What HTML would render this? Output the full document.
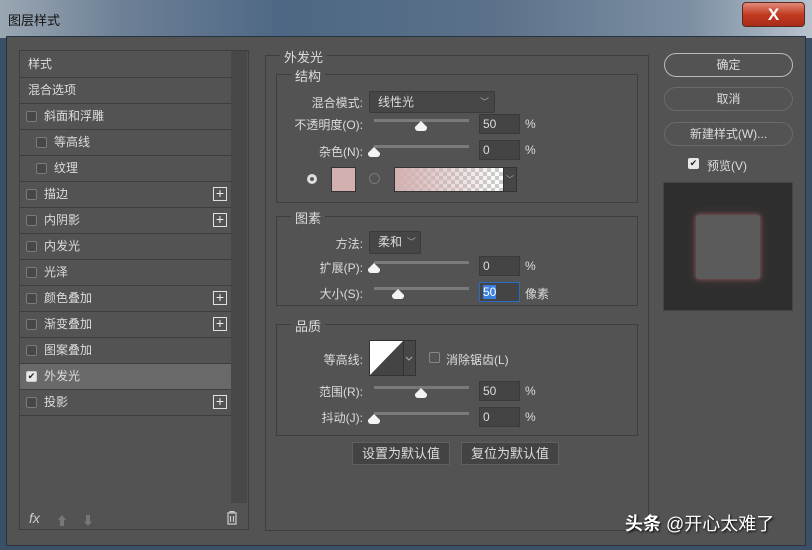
<!DOCTYPE html>
<html><head><meta charset="utf-8"><style>
*{box-sizing:border-box;margin:0;padding:0}
body{width:812px;height:550px;overflow:hidden;background:#3b5066;font-family:"Liberation Sans","Noto Sans CJK SC",sans-serif;font-size:12px;color:#dcdcdc;position:relative}
.a{position:absolute}
.title{left:0;top:0;width:812px;height:38px;background:linear-gradient(90deg,#9aa7b3 0%,#6d8096 15%,#4d6784 35%,#5a7189 60%,#7d8fa3 85%,#b8c3cd 100%)}
.frame{left:6px;top:36px;width:800px;height:510px;background:#535353;border:1px solid #2a3440}
.list{left:19px;top:50px;width:230px;height:480px;border:1px solid #3f3f3f}
.scroll{left:231px;top:51px;width:16px;height:452px;background:#484848}
.item{position:absolute;left:20px;width:211px;height:26px;border-bottom:1px solid #3e3e3e;line-height:25px;font-size:12px}
.cb{position:absolute;width:11px;height:11px;border:1px solid #7a7a7a;border-radius:2px;background:#474747;top:7px}
.plus{position:absolute;right:4px;top:5px;width:14px;height:14px;border:1px solid #e0e0e0;color:#eee;font-size:14px;line-height:11px;text-align:center}
.grp{border:1px solid #3e3e3e}
.lbl{position:absolute;text-align:right;width:100px;font-size:12px}
.track{position:absolute;left:374px;width:95px;height:3px;background:#7a7a7a}
.thumb{position:absolute;width:12px;height:10px;background:#f4f4f4;border-radius:5px 5px 3px 3px;clip-path:polygon(50% 0,100% 60%,100% 100%,0 100%,0 60%)}
.inp{position:absolute;left:479px;width:41px;height:20px;background:#444;border:1px solid #3a3a3a;line-height:18px;padding-left:3px}
.pct{position:absolute;left:525px}
.btn{position:absolute;border:1px solid #7a7a7a;border-radius:12px;text-align:center;line-height:22px;height:24px}
.sbtn{position:absolute;height:23px;background:#434343;border:1px solid #5f5f5f;text-align:center;line-height:21px;font-size:13px}
.dd{position:absolute;background:#464646;border:1px solid #3a3a3a;border-radius:2px;padding-left:8px}
</style></head><body>
<div class="a title"></div>
<div class="a" style="left:8px;top:10px;font-size:13px;color:#111">图层样式</div>
<div class="a" style="left:742px;top:2px;width:63px;height:25px;background:linear-gradient(#e08a78,#c23b22 50%,#a82c18);border:1px solid #5a2a20;border-radius:4px;color:#fff;font-weight:bold;font-size:17px;text-align:center;line-height:23px">X</div>
<div class="a frame"></div>
<div class="a list"></div>
<div class="a scroll"></div>
<div class="item" style="top:52px;padding-left:8px">样式</div>
<div class="item" style="top:78px;padding-left:8px">混合选项</div>
<div class="item" style="top:104px;padding-left:24px"><span class="cb" style="left:6px"></span>斜面和浮雕</div>
<div class="item" style="top:130px;padding-left:34px"><span class="cb" style="left:16px"></span>等高线</div>
<div class="item" style="top:156px;padding-left:34px"><span class="cb" style="left:16px"></span>纹理</div>
<div class="item" style="top:182px;padding-left:24px"><span class="cb" style="left:6px"></span>描边<span class="plus">+</span></div>
<div class="item" style="top:208px;padding-left:24px"><span class="cb" style="left:6px"></span>内阴影<span class="plus">+</span></div>
<div class="item" style="top:234px;padding-left:24px"><span class="cb" style="left:6px"></span>内发光</div>
<div class="item" style="top:260px;padding-left:24px"><span class="cb" style="left:6px"></span>光泽</div>
<div class="item" style="top:286px;padding-left:24px"><span class="cb" style="left:6px"></span>颜色叠加<span class="plus">+</span></div>
<div class="item" style="top:312px;padding-left:24px"><span class="cb" style="left:6px"></span>渐变叠加<span class="plus">+</span></div>
<div class="item" style="top:338px;padding-left:24px"><span class="cb" style="left:6px"></span>图案叠加</div>
<div class="item" style="top:364px;padding-left:24px;background:#696969"><span class="cb" style="left:6px;background:#e8e8e8;border-color:#ccc;color:#222;font-size:9px;line-height:9px;text-align:center">✔</span>外发光</div>
<div class="item" style="top:390px;padding-left:24px"><span class="cb" style="left:6px"></span>投影<span class="plus">+</span></div>
<div class="a" style="left:29px;top:510px;font-style:italic;font-size:14px;color:#ccc">fx</div>
<div class="a" style="left:56px;top:512px;color:#777;font-size:12px">⬆</div>
<div class="a" style="left:82px;top:512px;color:#777;font-size:12px">⬇</div>
<svg class="a" style="left:226px;top:511px" width="12" height="14"><path d="M1 2h10M4 2V0.5h4V2M2 3v10h8V3M4.5 5v6M7.5 5v6" stroke="#ccc" fill="none" stroke-width="1.2"/></svg>

<div class="a grp" style="left:265px;top:55px;width:384px;height:476px"></div>
<div class="a" style="left:280px;top:47px;background:#535353;padding:0 4px;font-size:13px">外发光</div>
<div class="a grp" style="left:276px;top:74px;width:362px;height:129px"></div>
<div class="a" style="left:291px;top:66px;background:#535353;padding:0 4px;font-size:13px">结构</div>
<div class="lbl" style="left:263px;top:94px">混合模式:</div>
<div class="dd" style="left:369px;top:91px;width:126px;height:22px;line-height:20px">线性光<span style="position:absolute;right:5px;color:#aaa;font-size:9px">﹀</span></div>
<div class="lbl" style="left:263px;top:116px">不透明度(O):</div>
<div class="track" style="top:119px"></div><div class="thumb" style="left:415px;top:121px"></div>
<div class="inp" style="top:114px">50</div><div class="pct" style="top:117px">%</div>
<div class="lbl" style="left:263px;top:143px">杂色(N):</div>
<div class="track" style="top:145px"></div><div class="thumb" style="left:368px;top:147px"></div>
<div class="inp" style="top:140px">0</div><div class="pct" style="top:143px">%</div>
<div class="a" style="left:307px;top:174px;width:10px;height:10px;border-radius:50%;background:#ddd;border:3px solid #ddd;box-shadow:inset 0 0 0 2px #555"></div>
<div class="a" style="left:331px;top:167px;width:25px;height:25px;background:#d2b0b0;border:1px solid #333"></div>
<div class="a" style="left:369px;top:173px;width:11px;height:11px;border-radius:50%;border:1px solid #777"></div>
<div class="a" style="left:394px;top:167px;width:110px;height:25px;background:linear-gradient(90deg,#d2b0b0,rgba(210,176,176,0)),repeating-conic-gradient(#ccc 0 25%,#fff 0 50%) 0 0/8px 8px;border:1px solid #333"></div>
<div class="a" style="left:503px;top:167px;width:14px;height:25px;background:#464646;border:1px solid #333;color:#aaa;font-size:8px;text-align:center;line-height:23px">﹀</div>

<div class="a grp" style="left:276px;top:216px;width:362px;height:90px"></div>
<div class="a" style="left:291px;top:208px;background:#535353;padding:0 4px;font-size:13px">图素</div>
<div class="lbl" style="left:263px;top:235px">方法:</div>
<div class="dd" style="left:369px;top:231px;width:52px;height:23px;line-height:21px">柔和<span style="position:absolute;right:4px;color:#aaa;font-size:9px">﹀</span></div>
<div class="lbl" style="left:263px;top:259px">扩展(P):</div>
<div class="track" style="top:261px"></div><div class="thumb" style="left:368px;top:263px"></div>
<div class="inp" style="top:256px">0</div><div class="pct" style="top:259px">%</div>
<div class="lbl" style="left:263px;top:285px">大小(S):</div>
<div class="track" style="top:287px"></div><div class="thumb" style="left:392px;top:289px"></div>
<div class="inp" style="top:282px;border-color:#2a6ac0"><span style="background:#3a7fe0;color:#fff">50</span></div><div class="a" style="left:525px;top:285px">像素</div>

<div class="a grp" style="left:276px;top:324px;width:362px;height:112px"></div>
<div class="a" style="left:291px;top:316px;background:#535353;padding:0 4px;font-size:13px">品质</div>
<div class="lbl" style="left:263px;top:351px">等高线:</div>
<svg class="a" style="left:369px;top:340px" width="47" height="36"><rect x="0.5" y="0.5" width="34" height="35" fill="#444" stroke="#333"/><path d="M1 35L34 1H1z" fill="#fff"/><rect x="34.5" y="0.5" width="12" height="35" fill="#474747" stroke="#333"/><path d="M37 17l3 3 3-3" stroke="#aaa" fill="none"/></svg>
<div class="a" style="left:429px;top:352px;width:11px;height:11px;border:1px solid #888;border-radius:2px"></div>
<div class="a" style="left:446px;top:351px">消除锯齿(L)</div>
<div class="lbl" style="left:263px;top:383px">范围(R):</div>
<div class="track" style="top:386px"></div><div class="thumb" style="left:415px;top:388px"></div>
<div class="inp" style="top:381px">50</div><div class="pct" style="top:384px">%</div>
<div class="lbl" style="left:263px;top:409px">抖动(J):</div>
<div class="track" style="top:412px"></div><div class="thumb" style="left:368px;top:414px"></div>
<div class="inp" style="top:407px">0</div><div class="pct" style="top:410px">%</div>
<div class="sbtn" style="left:352px;top:442px;width:98px">设置为默认值</div>
<div class="sbtn" style="left:461px;top:442px;width:98px">复位为默认值</div>

<div class="btn" style="left:664px;top:53px;width:129px;border-color:#bbb;border-width:1.5px">确定</div>
<div class="btn" style="left:664px;top:87px;width:129px;border-color:#6a6a6a">取消</div>
<div class="btn" style="left:664px;top:122px;width:129px;border-color:#6a6a6a">新建样式(W)...</div>
<div class="a" style="left:688px;top:158px;width:11px;height:11px;background:#e8e8e8;border-radius:2px;color:#222;font-size:9px;line-height:11px;text-align:center">✔</div>
<div class="a" style="left:707px;top:157px">预览(V)</div>
<div class="a" style="left:663px;top:182px;width:130px;height:129px;background:#2e2e2e;border:1px solid #444"></div>
<div class="a" style="left:696px;top:215px;width:64px;height:64px;background:#5b5b5b;border-radius:3px;box-shadow:0 0 3px 1px rgba(190,110,110,.45),0 0 9px 3px rgba(150,90,90,.25)"></div>

<div class="a" style="left:625px;top:510px;font-size:18px;color:#fff;text-shadow:1px 1px 2px #000"><b>头条</b> @开心太难了</div>
</body></html>
